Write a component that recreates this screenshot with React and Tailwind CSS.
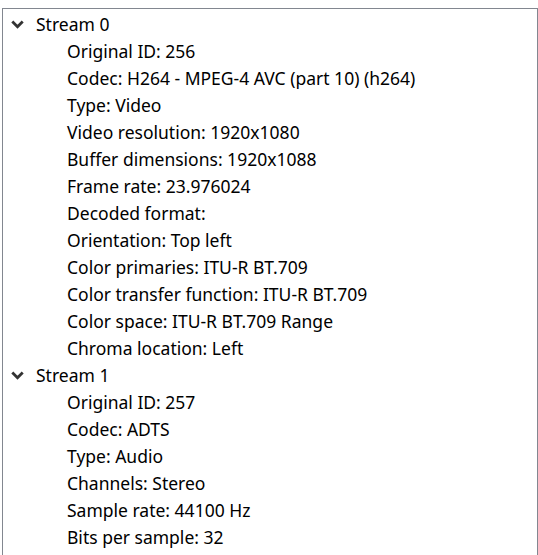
import React from 'react';

const streams = [
  {
    name: 'Stream 0',
    items: [
      'Original ID: 256',
      'Codec: H264 - MPEG-4 AVC (part 10) (h264)',
      'Type: Video',
      'Video resolution: 1920x1080',
      'Buffer dimensions: 1920x1088',
      'Frame rate: 23.976024',
      'Decoded format:',
      'Orientation: Top left',
      'Color primaries: ITU-R BT.709',
      'Color transfer function: ITU-R BT.709',
      'Color space: ITU-R BT.709 Range',
      'Chroma location: Left',
    ],
  },
  {
    name: 'Stream 1',
    items: [
      'Original ID: 257',
      'Codec: ADTS',
      'Type: Audio',
      'Channels: Stereo',
      'Sample rate: 44100 Hz',
      'Bits per sample: 32',
    ],
  },
];

// tree expander, drawn like the windows one
const Chevron = () => (
  <svg width="13" height="9" viewBox="0 0 13 9" className="shrink-0">
    <path d="M1.3 1.5 L6.5 6.7 L11.7 1.5" fill="none" stroke="#333" strokeWidth="2.8" />
  </svg>
);

const App = () => {
  return (
    <div className="w-[538px] h-[555px] bg-white overflow-hidden pt-2 pl-[2px]">
      <div
        className="w-[536px] h-[560px] border border-[#828790] border-b-0 pt-[2px] text-[17.5px] text-black"
        style={{ fontFamily: '"Noto Sans", sans-serif' }}
      >
        {streams.map((s) => (
          <div key={s.name}>
            <div className="h-[27px] flex items-center pl-[8px]">
              <Chevron />
              <span className="ml-[12px]">{s.name}</span>
            </div>
            {s.items.map((it) => (
              <div key={it} className="h-[27px] flex items-center pl-[64px]">
                {it}
              </div>
            ))}
          </div>
        ))}
      </div>
    </div>
  );
};

export default App;
